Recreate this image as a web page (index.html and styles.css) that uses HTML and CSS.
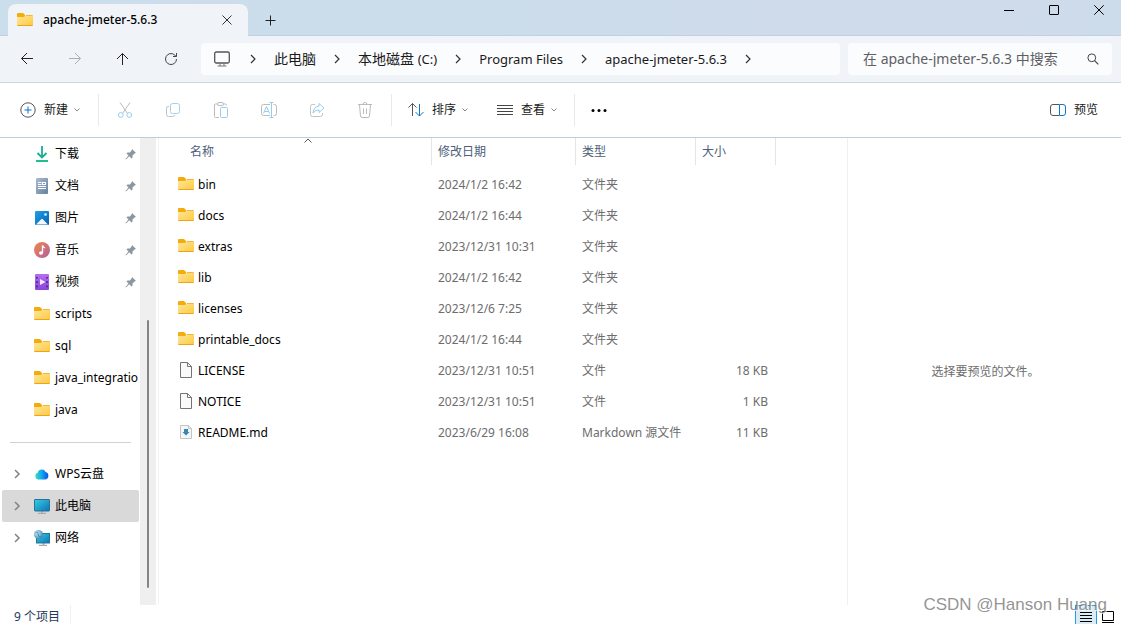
FILE: index.html
```html
<!DOCTYPE html>
<html lang="zh-CN">
<head>
<meta charset="utf-8">
<title>apache-jmeter-5.6.3</title>
<link rel="stylesheet" href="styles.css">
</head>
<body>
<svg class="defs" aria-hidden="true">
  <defs>
    <linearGradient id="g-folder" x1="0" y1="0" x2="1" y2="1"><stop offset="0" stop-color="#ffe7a0"/><stop offset="1" stop-color="#fdca3c"/></linearGradient>
    <linearGradient id="g-down" x1="0" y1="0" x2="0" y2="1"><stop offset="0" stop-color="#35cf93"/><stop offset="1" stop-color="#0f9d9a"/></linearGradient>
    <linearGradient id="g-doc" x1="0" y1="0" x2="1" y2="1"><stop offset="0" stop-color="#a9bdd2"/><stop offset="1" stop-color="#65809e"/></linearGradient>
    <linearGradient id="g-pic" x1="0" y1="0" x2="1" y2="1"><stop offset="0" stop-color="#1fa0e6"/><stop offset="1" stop-color="#0560b4"/></linearGradient>
    <linearGradient id="g-music" x1="0" y1="0" x2="1" y2="1"><stop offset="0" stop-color="#f0884c"/><stop offset="1" stop-color="#b0609f"/></linearGradient>
    <linearGradient id="g-video" x1="0" y1="0" x2="0" y2="1"><stop offset="0" stop-color="#b56df0"/><stop offset="1" stop-color="#8a45dc"/></linearGradient>
    <linearGradient id="g-screen" x1="0" y1="0" x2="1" y2="1"><stop offset="0" stop-color="#35d0dc"/><stop offset="1" stop-color="#0f70bd"/></linearGradient>
    <linearGradient id="g-cloud" x1="0" y1="0" x2="1" y2="0"><stop offset="0" stop-color="#3be0b8"/><stop offset=".5" stop-color="#12a5ef"/><stop offset="1" stop-color="#0b50e8"/></linearGradient>
    <radialGradient id="g-globe" cx=".35" cy=".35" r=".7"><stop offset="0" stop-color="#cfeaf4"/><stop offset="1" stop-color="#3b88b0"/></radialGradient>
  </defs>
  <symbol id="folder" viewBox="0 1 16 16"><path d="M0 3Q0 2 1 2H6L8 4V6H0Z" fill="#f3ac0c"/><path d="M0 6H7L9 4H15Q16 4 16 5V14Q16 15 15 15H1Q0 15 0 14Z" fill="url(#g-folder)"/><path d="M9 4.500H15.500" stroke="#f0b73a"/><path d="M.5 14.500H15.500" stroke="#e9a520"/></symbol>
  <symbol id="file" viewBox="0 0 16 16"><path d="M2.500 .5H9.500L13.500 4.500V15.500H2.500Z" fill="#fafafa" stroke="#747474"/><path d="M9.500 .5V4.500H13.500" fill="none" stroke="#747474"/></symbol>
  <symbol id="mdfile" viewBox="0 0 16 16"><path d="M2.500 1.500H10.500L13.500 4.500V14.500H2.500Z" fill="#f5f6f7" stroke="#c3c6c9"/><path d="M10.500 1.500V4.500H13.500" fill="none" stroke="#c3c6c9"/><path d="M6 5H10V8H11.500L8 11.500 4.500 8H6Z" fill="#3989ad"/></symbol>
  <symbol id="download" viewBox="0 0 16 16"><path d="M8 0V11M3.500 7L8 11.500L12.500 7" fill="none" stroke="#19ad95" stroke-width="1.800"/><path d="M2 15H14" stroke="#23bd90" stroke-width="2"/></symbol>
  <symbol id="document" viewBox="0 0 16 16"><rect x="2" width="12" height="16" rx="1" fill="url(#g-doc)"/><path d="M4 4.500H7.500M4 6.500H7.500M4 8.500H12M4 10.500H12" stroke="#fff"/><rect x="8.500" y="4.500" width="3" height="2" fill="#8096b0" stroke="#fff"/></symbol>
  <symbol id="picture" viewBox="0 0 16 16"><rect x="1" y="1" width="14" height="14" rx="1" fill="url(#g-pic)"/><path d="M2 14.500L7.500 9Q8 8.500 8.500 9L14 14.500Z" fill="#f3f8fd"/><circle cx="11.500" cy="4.500" r="1.300" fill="#e5f5ff"/></symbol>
  <symbol id="music" viewBox="0 0 16 16"><circle cx="8" cy="8" r="8" fill="url(#g-music)"/><ellipse cx="7" cy="11" rx="2" ry="1.700" fill="#fff"/><path d="M8.500 11V3.500Q9.500 5.500 11 6" stroke="#fff" stroke-width="1.300" fill="none"/></symbol>
  <symbol id="video" viewBox="0 0 16 16"><rect x="1" width="14" height="16" rx="1" fill="url(#g-video)"/><path d="M3 3V14.500M13 3V14.500" stroke="#452178" stroke-width="1.600" stroke-dasharray="1.600 2.700"/><path d="M6 5L11.500 8L6 11Z" fill="#f5ecff"/></symbol>
  <symbol id="cloud" viewBox="0 0 16 16"><path d="M4.500 13.500A3.500 3.500 0 0 1 3.700 6.700A4.200 4.200 0 0 1 11.600 6A3.900 3.900 0 0 1 11.500 13.500Z" fill="url(#g-cloud)"/></symbol>
  <symbol id="computer" viewBox="0 0 16 16"><path d="M8 13V15M4 15.500H12" stroke="#a3acb3" stroke-width="1.500"/><rect x=".5" y="1.500" width="15" height="11.500" rx=".5" fill="url(#g-screen)" stroke="#237595"/></symbol>
  <symbol id="network" viewBox="0 0 16 16"><path d="M9.500 13V15M5 15.500H13" stroke="#a3acb3" stroke-width="1.500"/><rect x="2.500" y="3.500" width="13" height="9.500" fill="url(#g-screen)" stroke="#237595"/><circle cx="4.500" cy="4.500" r="4.500" fill="url(#g-globe)"/><path d="M1.500 3Q4 1 4 4T7 7" fill="none" stroke="#368db5"/></symbol>
  <symbol id="pin" viewBox="0 0 12 12"><path d="M7 1L11 5L9.500 5.500L7.500 7.500V9.500L6.500 10.500L4.200 8.200L1 11.500L.5 11L3.500 7.500L1.500 5.500L2.500 4.500H5L6.500 2.500Z" fill="#8b969e"/></symbol>
  <symbol id="right" viewBox="0 0 8 10"><path d="M2 1L6 5L2 9" fill="none" stroke="currentColor" stroke-width="1.200"/></symbol>
  <symbol id="expand" viewBox="0 0 8 10"><path d="M2 1L6 5L2 9" fill="none" stroke="#868686" stroke-width="1.600"/></symbol>
  <symbol id="down" viewBox="0 0 8 8"><path d="M1.500 2.500L4 5L6.500 2.500" fill="none" stroke="#888"/></symbol>
</svg>

<div class="window">
  <header class="titlebar">
    <div class="tab">
      <svg class="icon"><use href="#folder"/></svg>
      <span class="tab-title">apache-jmeter-5.6.3</span>
      <button class="plain tab-close" aria-label="关闭标签页"><svg viewBox="0 0 10 10" width="10" height="10"><path d="M.5 .5L9.500 9.500M9.500 .5L.5 9.500" stroke="#333"/></svg></button>
    </div>
    <button class="plain tab-new" aria-label="新标签页"><svg viewBox="0 0 11 11" width="11" height="11"><path d="M5.500 .5V10.500M.5 5.500H10.500" stroke="#222"/></svg></button>
    <div class="caption">
      <button class="plain" aria-label="最小化"><svg viewBox="0 0 10 10" width="10" height="10"><path d="M0 5.500H10" stroke="#000"/></svg></button>
      <button class="plain" aria-label="最大化"><svg viewBox="0 0 10 10" width="10" height="10"><rect x=".5" y=".5" width="9" height="9" rx=".5" fill="none" stroke="#000"/></svg></button>
      <button class="plain" aria-label="关闭"><svg viewBox="0 0 10 10" width="10" height="10"><path d="M.3 .3L9.700 9.700M9.700 .3L.3 9.700" stroke="#000"/></svg></button>
    </div>
  </header>

  <nav class="navbar">
    <div class="nav-buttons">
      <button class="plain" aria-label="后退"><svg viewBox="0 0 14 14" width="14" height="14"><path d="M13 6.500H1.500M7 1L1.500 6.500L7 12" fill="none" stroke="#222"/></svg></button>
      <button class="plain" aria-label="前进" disabled><svg viewBox="0 0 14 14" width="14" height="14"><path d="M1 6.500H12.500M7 1L12.500 6.500L7 12" fill="none" stroke="#aaaeb2"/></svg></button>
      <button class="plain" aria-label="向上"><svg viewBox="0 0 14 14" width="14" height="14"><path d="M6.500 13V1.500M1 7L6.500 1.500L12 7" fill="none" stroke="#222"/></svg></button>
      <button class="plain" aria-label="刷新"><svg viewBox="0 0 14 14" width="14" height="14"><path d="M12.500 7A5.500 5.500 0 1 1 10.500 2.800L12 4.500M12.500 1V4.500H9" fill="none" stroke="#444"/></svg></button>
    </div>
    <div class="address">
      <svg class="device" viewBox="0 0 16 16"><rect x=".7" y="1" width="14.600" height="11" rx="1.500" fill="none" stroke="#555" stroke-width="1.300"/><path d="M6 12V15M10 12V15M3.500 15H12.500" stroke="#777" fill="none"/></svg>
      <svg class="crumb-arrow"><use href="#right"/></svg>
      <a class="cjk" href="#pc">此电脑</a>
      <svg class="crumb-arrow"><use href="#right"/></svg>
      <a class="cjk" href="#c">本地磁盘 <span class="latin">(C:)</span></a>
      <svg class="crumb-arrow"><use href="#right"/></svg>
      <a href="#pf">Program Files</a>
      <svg class="crumb-arrow"><use href="#right"/></svg>
      <a href="#jmeter">apache-jmeter-5.6.3</a>
      <svg class="crumb-arrow"><use href="#right"/></svg>
    </div>
    <div class="search">
      <input type="search" aria-label="搜索" placeholder="在 apache-jmeter-5.6.3 中搜索">
      <svg viewBox="0 0 12 12" width="12" height="12"><circle cx="4.800" cy="4.800" r="3.900" fill="none" stroke="#444"/><path d="M7.600 7.600L11.300 11.300" stroke="#444" stroke-width="1.200"/></svg>
    </div>
  </nav>

  <div class="toolbar">
    <button class="plain command"><svg class="icon" viewBox="0 0 16 16"><circle cx="8" cy="8" r="7.200" fill="none" stroke="#555"/><path d="M8 4.500V11.500M4.500 8H11.500" stroke="#0a75cf"/></svg>新建<svg class="caret"><use href="#down"/></svg></button>
    <div class="tools">
      <button class="plain" aria-label="剪切" disabled><svg class="icon" viewBox="0 0 16 16" fill="none"><path d="M3 .5L10.300 11.200M13 .5L5.700 11.200" stroke="#bbb"/><circle cx="3.800" cy="13" r="2.400" stroke="#98ccee"/><circle cx="12.200" cy="13" r="2.400" stroke="#98ccee"/></svg></button>
      <button class="plain" aria-label="复制" disabled><svg class="icon" viewBox="0 0 16 16" fill="none"><path d="M4 4.500H3Q1.500 4.500 1.500 6V12.500Q1.500 14.500 3.500 14.500H7.500Q9.500 14.500 9.500 13" stroke="#c3c3c3"/><rect x="5.500" y="1.500" width="9" height="10" rx="2" stroke="#a4d1ee"/></svg></button>
      <button class="plain" aria-label="粘贴" disabled><svg class="icon" viewBox="0 0 16 16" fill="none"><path d="M4.500 2H2.500Q1.500 2 1.500 3V14.500Q1.500 15.500 2.500 15.500H6M10.500 2H12.500Q13.500 2 13.500 3.500" stroke="#bbb"/><rect x="4.500" y=".5" width="6" height="3" rx="1.500" stroke="#bbb"/><rect x="7.500" y="5.500" width="7" height="10" rx="1" stroke="#98ccee"/></svg></button>
      <button class="plain" aria-label="重命名" disabled><svg class="icon" viewBox="0 0 16 16" fill="none"><path d="M9 2.500H2.500Q.5 2.500 .5 4.500V11.500Q.5 13.500 2.500 13.500H9M12.500 2.500H13.500Q15.500 2.500 15.500 4.500V11.500Q15.500 13.500 13.500 13.500H12.500" stroke="#bbb"/><path d="M10.500 1V15M8.500 .5H12.500M8.500 15.500H12.500M2.500 11.500L5.500 4.500L8.500 11.500M3.500 9.500H7.500" stroke="#98ccee"/></svg></button>
      <button class="plain" aria-label="共享" disabled><svg class="icon" viewBox="0 0 16 16" fill="none"><path d="M6 2.500H3.500Q1.500 2.500 1.500 4.500V12.500Q1.500 14.500 3.500 14.500H11.500Q13.500 14.500 13.500 12.500V11" stroke="#c3c3c3"/><path d="M10 1.500L15 6L10 10.500V8Q6.500 7.500 4 11Q4.500 5 10 4Z" stroke="#98ccee" stroke-linejoin="round"/></svg></button>
      <button class="plain" aria-label="删除" disabled><svg class="icon" viewBox="0 0 16 16" fill="none"><path d="M1 2.500H15M6 2.500Q6 .5 8 .5T10 2.500M2.500 3L3.500 14Q3.600 15.500 5 15.500H11Q12.400 15.500 12.500 14L13.500 3M6.500 6.500V12M9.500 6.500V12" stroke="#bbb"/></svg></button>
    </div>
    <div class="views">
      <button class="plain command"><svg class="icon" viewBox="0 0 16 16" fill="none"><path d="M4.500 14V1.500M.5 5.500L4.500 1.500L8.500 5.500" stroke="#555"/><path d="M11.500 2V14M7.500 10L11.500 14L15.500 10" stroke="#0878d0"/></svg>排序<svg class="caret"><use href="#down"/></svg></button>
      <button class="plain command"><svg class="icon" viewBox="0 0 16 16"><path d="M0 3.500H16M0 6.500H16M0 9.500H16M0 12.500H16" stroke="#444"/></svg>查看<svg class="caret"><use href="#down"/></svg></button>
    </div>
    <button class="plain more" aria-label="更多"><svg class="icon" viewBox="0 0 16 16"><circle cx="2" cy="8.500" r="1.500"/><circle cx="8" cy="8.500" r="1.500"/><circle cx="14" cy="8.500" r="1.500"/></svg></button>
    <button class="plain command preview-toggle"><svg class="icon" viewBox="0 0 16 16" fill="none"><path d="M9 2.500H3Q.5 2.500 .5 5V11Q.5 13.500 3 13.500H9" stroke="#555"/><path d="M9.500 2.500H13Q15.500 2.500 15.500 5V11Q15.500 13.500 13 13.500H9.500Z" stroke="#0878d0"/></svg>预览</button>
  </div>

  <main class="content">
    <aside class="sidebar">
      <ul class="tree">
        <li><a href="#dl"><svg class="icon"><use href="#download"/></svg><span>下载</span><svg class="pin"><use href="#pin"/></svg></a></li>
        <li><a href="#doc"><svg class="icon"><use href="#document"/></svg><span>文档</span><svg class="pin"><use href="#pin"/></svg></a></li>
        <li><a href="#pic"><svg class="icon"><use href="#picture"/></svg><span>图片</span><svg class="pin"><use href="#pin"/></svg></a></li>
        <li><a href="#mus"><svg class="icon"><use href="#music"/></svg><span>音乐</span><svg class="pin"><use href="#pin"/></svg></a></li>
        <li><a href="#vid"><svg class="icon"><use href="#video"/></svg><span>视频</span><svg class="pin"><use href="#pin"/></svg></a></li>
        <li><a href="#scripts"><svg class="icon"><use href="#folder"/></svg><span>scripts</span></a></li>
        <li><a href="#sql"><svg class="icon"><use href="#folder"/></svg><span>sql</span></a></li>
        <li><a href="#ji"><svg class="icon"><use href="#folder"/></svg><span>java_integratio</span></a></li>
        <li><a href="#java"><svg class="icon"><use href="#folder"/></svg><span>java</span></a></li>
      </ul>
      <hr class="divider">
      <ul class="tree roots">
        <li><a href="#wps"><svg class="expander"><use href="#expand"/></svg><svg class="icon"><use href="#cloud"/></svg><span>WPS云盘</span></a></li>
        <li><a class="selected" href="#pc"><svg class="expander"><use href="#expand"/></svg><svg class="icon"><use href="#computer"/></svg><span>此电脑</span></a></li>
        <li><a href="#net"><svg class="expander"><use href="#expand"/></svg><svg class="icon"><use href="#network"/></svg><span>网络</span></a></li>
      </ul>
    </aside>
    <div class="scrollbar"><div class="thumb"></div></div>

    <section class="files">
      <table>
        <colgroup><col class="c-name"><col class="c-date"><col class="c-type"><col class="c-size"></colgroup>
        <thead>
          <tr>
            <th><div class="head">名称<svg class="sort" viewBox="0 0 8 5"><path d="M.5 4.500L4 1L7.500 4.500" fill="none" stroke="#555"/></svg></div></th>
            <th><div class="head">修改日期</div></th>
            <th><div class="head">类型</div></th>
            <th><div class="head">大小</div></th>
          </tr>
        </thead>
        <tbody>
          <tr><td><div class="name"><svg class="icon"><use href="#folder"/></svg>bin</div></td><td>2024/1/2 16:42</td><td>文件夹</td><td></td></tr>
          <tr><td><div class="name"><svg class="icon"><use href="#folder"/></svg>docs</div></td><td>2024/1/2 16:44</td><td>文件夹</td><td></td></tr>
          <tr><td><div class="name"><svg class="icon"><use href="#folder"/></svg>extras</div></td><td>2023/12/31 10:31</td><td>文件夹</td><td></td></tr>
          <tr><td><div class="name"><svg class="icon"><use href="#folder"/></svg>lib</div></td><td>2024/1/2 16:42</td><td>文件夹</td><td></td></tr>
          <tr><td><div class="name"><svg class="icon"><use href="#folder"/></svg>licenses</div></td><td>2023/12/6 7:25</td><td>文件夹</td><td></td></tr>
          <tr><td><div class="name"><svg class="icon"><use href="#folder"/></svg>printable_docs</div></td><td>2024/1/2 16:44</td><td>文件夹</td><td></td></tr>
          <tr><td><div class="name"><svg class="icon"><use href="#file"/></svg>LICENSE</div></td><td>2023/12/31 10:51</td><td>文件</td><td>18 KB</td></tr>
          <tr><td><div class="name"><svg class="icon"><use href="#file"/></svg>NOTICE</div></td><td>2023/12/31 10:51</td><td>文件</td><td>1 KB</td></tr>
          <tr><td><div class="name"><svg class="icon"><use href="#mdfile"/></svg>README.md</div></td><td>2023/6/29 16:08</td><td>Markdown 源文件</td><td>11 KB</td></tr>
        </tbody>
      </table>
    </section>

    <aside class="preview">选择要预览的文件。</aside>
  </main>

  <footer class="status">
    <span class="count">9 个项目</span>
    <div class="modes">
      <button class="plain active" aria-label="详细信息"><svg viewBox="0 0 12 12" width="12" height="12"><path d="M0 1.500H12M0 4.500H12M0 7.500H12M0 10.500H12" stroke="#000"/></svg></button>
      <button class="plain" aria-label="大图标"><svg viewBox="0 0 12 12" width="12" height="12"><path d="M.5 .5H11.500V9.500H.5ZM0 11.500H12" fill="none" stroke="#000"/></svg></button>
    </div>
  </footer>
  <div class="watermark">CSDN @Hanson Huang</div>
</div>
</body>
</html>
```
FILE: styles.css
```css
* { box-sizing: border-box; }

body {
  margin: 0;
  font-family: "Noto Sans", "Noto Sans CJK SC", sans-serif;
  font-size: 12px;
  line-height: 16px;
  color: #000;
}

a { color: inherit; text-decoration: none; }
svg { display: block; flex: none; }
.defs { position: absolute; width: 0; height: 0; }
.icon { width: 16px; height: 16px; }

.plain {
  display: flex;
  align-items: center;
  justify-content: center;
  padding: 0;
  border: 0;
  background: none;
  font: inherit;
  color: #1a1a1a;
}

.window {
  position: relative;
  display: flex;
  flex-direction: column;
  height: 100vh;
  overflow: hidden;
  background: #fff;
}

/* Title bar */
.titlebar {
  display: flex;
  height: 36px;
  padding: 4px 0 0 8px;
  background: linear-gradient(100deg, #cbdeeb, #ccdcea 55%, #cfdbeb 70%, #cfdbeb 90%, #ccdcea);
  box-shadow: inset 0 -1px #bfd0e0;
}
.tab {
  display: flex;
  align-items: center;
  width: 240px;
  height: 32px;
  padding: 0 13px 0 9px;
  border-radius: 8px 8px 0 0;
  background: #f0f4f9;
}
.tab-title { flex: 1; padding-left: 10px; font-weight: 500; }
.tab-close { width: 16px; height: 16px; }
.tab-new { width: 44px; }
.caption { display: flex; margin-left: auto; height: 12px; }
.caption .plain { width: 45px; }

/* Navigation */
.navbar {
  display: flex;
  align-items: center;
  height: 47px;
  padding: 0 9px 0 3px;
  border-bottom: 1px solid #c9d5e0;
  background: #f0f4f9;
}
.nav-buttons { display: flex; width: 198px; }
.nav-buttons .plain { width: 48px; height: 32px; }
.address, .search {
  display: flex;
  align-items: center;
  height: 32px;
  border-radius: 4px;
  background: #fbfcfe;
}
.address {
  flex: 1;
  margin-right: 8px;
  padding-left: 13px;
  font-size: 13px;
  color: #1a1a1a;
  white-space: nowrap;
}
.device { width: 16px; height: 16px; margin-right: 2px; }
.cjk { font-size: 14px; }
.latin { font-size: 13px; }
.crumb-arrow { width: 42px; height: 10px; color: #333; }
.search { width: 264px; padding: 0 13px 0 15px; }
.search input {
  flex: 1;
  min-width: 0;
  padding: 0;
  border: 0;
  outline: 0;
  background: none;
  font: inherit;
  font-size: 14px;
}
.search input::placeholder { color: #5e6063; opacity: 1; }

/* Toolbar */
.toolbar {
  display: flex;
  align-items: center;
  height: 55px;
  padding: 0 23px 0 20px;
  border-bottom: 1px solid #bccddb;
}
.command { gap: 8px; }
.caret { width: 8px; height: 8px; margin-left: -3px; }
.tools {
  display: flex;
  align-items: center;
  height: 32px;
  margin-left: 17px;
  padding: 0 2px;
  border: solid #e9e9e9;
  border-width: 0 1px;
}
.tools .plain { width: 48px; height: 32px; }
.views {
  display: flex;
  align-items: center;
  gap: 28px;
  height: 32px;
  padding: 0 16px;
  border-right: 1px solid #e9e9e9;
}
.more { margin-left: 16px; }
.preview-toggle { margin-left: auto; }

/* Panes */
.content { display: flex; flex: 1; min-height: 0; }
.sidebar { width: 140px; overflow: hidden; }
.tree { margin: 0; padding: 0 1px 0 2px; list-style: none; }
.tree a {
  display: flex;
  align-items: center;
  height: 32px;
  padding-left: 32px;
  border-radius: 2px;
  white-space: nowrap;
}
.tree a > span { flex: 1; min-width: 0; padding-left: 5px; overflow: hidden; }
.roots a { padding-left: 10px; }
.tree .selected { background: #d9d9d9; }
.expander { width: 10px; height: 10px; margin-right: 12px; }
.pin { width: 12px; height: 12px; margin-right: 2px; }
.divider { height: 1px; margin: 16px 9px 15px 10px; border: 0; background: #d2d2d2; }
.scrollbar {
  display: flex;
  justify-content: center;
  width: 16px;
  padding: 182px 0 17px;
  background: #efefef;
}
.thumb { width: 2px; background: #858585; border-radius: 1px; }

.files { flex: 1; min-width: 0; margin-left: 2px; border-left: 1px solid #f3f3f3; }
table { width: 617px; table-layout: fixed; border-collapse: collapse; color: #6d6d6d; }
.c-name { width: 273px; }
.c-date { width: 144px; }
.c-type { width: 120px; }
.c-size { width: 80px; }
th { height: 31px; padding: 0; vertical-align: top; text-align: left; font-weight: 400; color: #4c607a; }
.head { position: relative; height: 27px; padding: 6px 0 0 6px; border-right: 1px solid #e5e5e5; }
th:first-child .head { padding-left: 31px; }
.sort { position: absolute; top: 0; left: 145px; width: 8px; height: 5px; }
td { height: 31px; padding: 0 0 0 6px; white-space: nowrap; }
td:first-child { padding-left: 19px; color: #000; }
td:last-child { padding: 0 8px 0 0; text-align: right; }
.name { display: flex; align-items: center; gap: 4px; }
.name .icon { margin-bottom: 1px; }

.preview {
  display: flex;
  align-items: center;
  justify-content: center;
  width: 274px;
  padding-left: 2px;
  border-left: 1px solid #f0f0f0;
  color: #6d6d6d;
}

/* Status bar */
.status { display: flex; height: 19px; padding: 0 2px 0 14px; overflow: hidden; }
.count { padding: 4px 10px 0 0; border-right: 1px solid #f0f0f0; color: #1e395b; }
.modes { display: flex; margin-left: auto; }
.modes .plain { width: 22px; height: 24px; border: 1px solid transparent; }
.modes .active { border-color: #26a0da; background: #d9ecf5; }

.watermark {
  position: absolute;
  right: 14px;
  bottom: 9px;
  font: 17px/20px "Liberation Sans", Arial, sans-serif;
  color: rgba(120, 120, 120, .8);
  text-shadow: 1px 1px rgba(255, 255, 255, .7);
}
```
